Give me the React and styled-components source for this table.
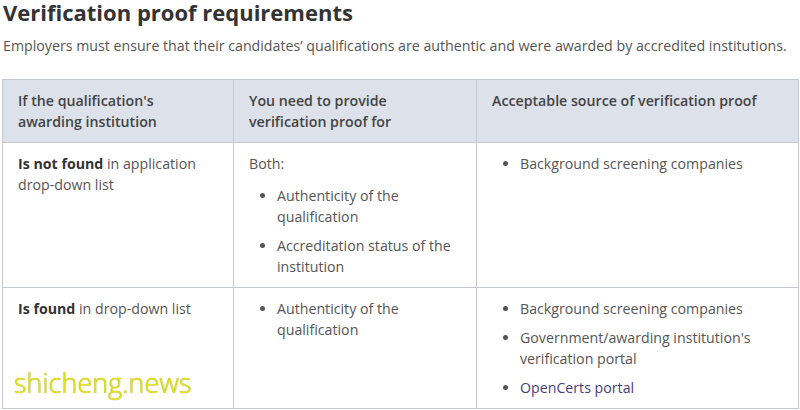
import React from 'react';
import styled, { createGlobalStyle } from 'styled-components';

const Global = createGlobalStyle`
  body {
    margin: 0;
    background: #fff;
    font-family: "Open Sans", "Liberation Sans", sans-serif;
  }
`

const Page = styled.div`
  position: relative;
  width: 800px;
  height: 410px;
  padding: 0 2px;
  box-sizing: border-box;
  overflow: hidden;
`

const Title = styled.h2`
  margin: 0;
  padding-left: 1px;
  font-size: 22px;
  line-height: 25px;
  font-weight: 700;
  color: #333;
`

const Lead = styled.p`
  margin: 10px 0 0;
  padding-left: 1px;
  font-size: 14.2px;
  line-height: 21px;
  color: #555;
`

const Table = styled.table`
  margin-top: 23px;
  width: 796px;
  border-collapse: collapse;
  table-layout: fixed;
  font-size: 14.2px;
  line-height: 21px;
  color: #555;
`

const Head = styled.th`
  background: #dde1ea;
  border: 1px solid #c4c8cf;
  padding: 10px 15px 10px;
  text-align: left;
  vertical-align: top;
  font-weight: 600;
  color: #444;
`

const Cell = styled.td`
  border: 1px solid #c4c8cf;
  padding: 10px 15px 10px;
  vertical-align: top;
`

const Strong = styled.b`
  font-weight: 700;
  color: #333;
`

const Para = styled.p`
  margin: 0 0 11px;
`

const List = styled.ul`
  margin: 0;
  padding-left: 28px;
`

const Item = styled.li`
  margin-bottom: 8px;
  &:last-child { margin-bottom: 0; }
`

const Link = styled.a`
  color: #473d7c;
  text-decoration: none;
`

const Watermark = styled.div`
  position: absolute;
  left: 14px;
  top: 366px;
  font-family: "Open Sans", sans-serif;
  font-size: 27px;
  line-height: 34px;
  font-weight: 300;
  color: #e6e612;
  text-shadow: 0 0 1px #8d8d00;
`

export default function App() {
  return (
    <Page>
      <Global />
      <Title>Verification proof requirements</Title>
      <Lead>Employers must ensure that their candidates’ qualifications are authentic and were awarded by accredited institutions.</Lead>
      <Table>
        <colgroup>
          <col style={{ width: 231 }} />
          <col style={{ width: 243 }} />
          <col style={{ width: 322 }} />
        </colgroup>
        <thead>
          <tr>
            <Head>If the qualification's awarding institution</Head>
            <Head>You need to provide verification proof for</Head>
            <Head>Acceptable source of verification proof</Head>
          </tr>
        </thead>
        <tbody>
          <tr>
            <Cell><Strong>Is not found</Strong> in application drop-down list</Cell>
            <Cell>
              <Para>Both:</Para>
              <List>
                <Item>Authenticity of the qualification</Item>
                <Item>Accreditation status of the institution</Item>
              </List>
            </Cell>
            <Cell>
              <List>
                <Item>Background screening companies</Item>
              </List>
            </Cell>
          </tr>
          <tr>
            <Cell><Strong>Is found</Strong> in drop-down list</Cell>
            <Cell>
              <List>
                <Item>Authenticity of the qualification</Item>
              </List>
            </Cell>
            <Cell>
              <List>
                <Item>Background screening companies</Item>
                <Item>Government/awarding institution's verification portal</Item>
                <Item><Link href="#">OpenCerts portal</Link></Item>
              </List>
            </Cell>
          </tr>
        </tbody>
      </Table>
      <Watermark>shicheng.news</Watermark>
    </Page>
  );
}
